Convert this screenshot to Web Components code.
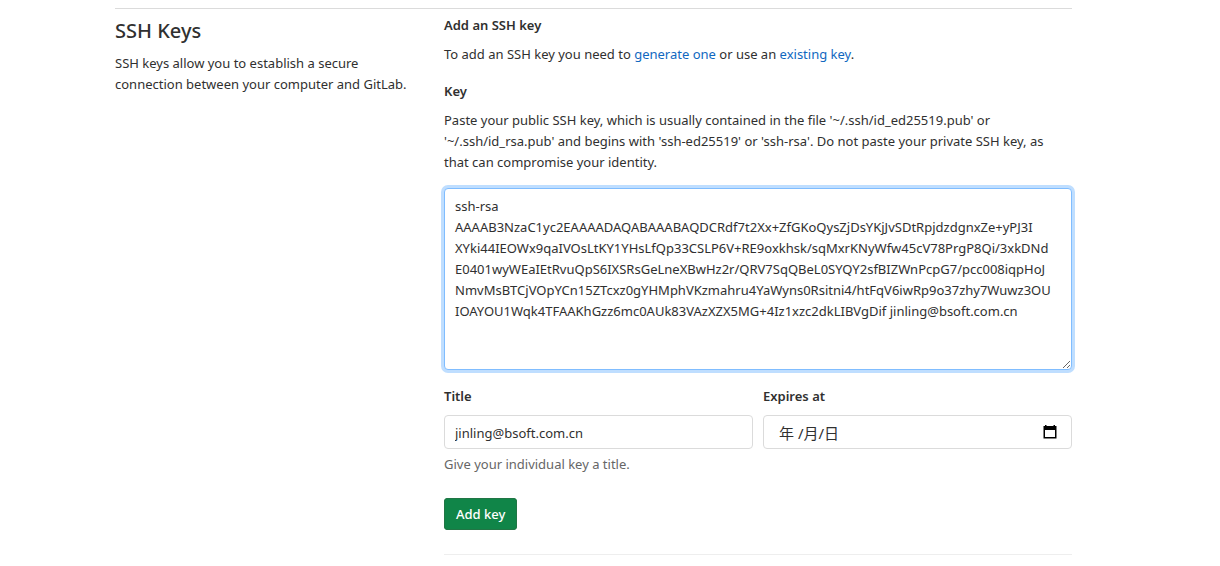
<!DOCTYPE html>
<html lang="en">
<head>
<meta charset="utf-8">
<meta name="viewport" content="width=device-width, initial-scale=1">
<title>SSH Keys</title>
<style>
    body {
        margin: 0;
        background: #fff;
        color: #303030;
        font: 13px/21px "Noto Sans", "Noto Sans CJK SC", sans-serif;
        --border: #dbdbdb;
        --link: #1068bf;
        --muted: #666;
        --green: #108548;
    }
    a {
        color: var(--link);
        text-decoration: none;
    }
</style>
</head>
<body>
<settings-section>
    <span slot="title">SSH Keys</span>
    <span slot="description">SSH keys allow you to establish a secure connection between your computer and GitLab.</span>
    <ssh-key-form>
        <span slot="intro">To add an SSH key you need to <a href="#generate">generate one</a> or use an <a href="#existing">existing key</a>.</span>
    </ssh-key-form>
</settings-section>

<script>
class SettingsSection extends HTMLElement {
    constructor () {
        super();
        this.attachShadow({ mode: 'open' }).innerHTML = `
            <style>
                :host {
                    display: block;
                    margin: 8px 148px 0 115px;
                    border-top: 1px solid var(--border);
                }
                .row {
                    display: grid;
                    grid-template-columns: minmax(0, 1fr) minmax(0, 2fr);
                    margin: 0 -15px;
                }
                .side, .content {
                    padding: 6px 15px 0;
                }
                h4 {
                    margin: 4px 0 10px;
                    font-size: 20px;
                    line-height: 24px;
                    font-weight: 500;
                }
                p {
                    margin: 0;
                }
            </style>
            <div class="row">
                <div class="side">
                    <h4><slot name="title"></slot></h4>
                    <p><slot name="description"></slot></p>
                </div>
                <div class="content"><slot></slot></div>
            </div>
        `;
    }
}

// label + control + help text; the control depends on the type attribute
class FormField extends HTMLElement {
    constructor () {
        super();
        this.attachShadow({ mode: 'open' });
    }

    connectedCallback () {
        this.shadowRoot.innerHTML = `
            <style>
                :host {
                    display: block;
                }
                label {
                    display: block;
                    margin-bottom: 8px;
                    font-weight: 600;
                }
                .help {
                    margin: 0 0 15px;
                    padding-right: 8px;
                }
                .hint {
                    margin: 5px 0 0;
                    color: var(--muted);
                }
                textarea, input {
                    display: block;
                    box-sizing: border-box;
                    width: 100%;
                    margin: 0;
                    font: inherit;
                    color: inherit;
                    outline: 0;
                }
                textarea, .box {
                    border: 1px solid var(--border);
                    border-radius: 4px;
                    background: #fff;
                }
                textarea {
                    height: 182px;
                    padding: 7px 10px;
                    resize: vertical;
                    border-color: #80bdff;
                    box-shadow: 0 0 0 3px #bfdeff;
                }
                .box {
                    display: flex;
                    align-items: center;
                }
                .box input {
                    flex: 1;
                    min-width: 0;
                    height: 32px;
                    padding: 2px 10px 0;
                    border: 0;
                    background: none;
                }
                .date input {
                    padding-left: 15px;
                    font-size: 15px;
                }
                input::placeholder {
                    color: inherit;
                    opacity: 1;
                }
                .date button {
                    display: flex;
                    margin: 0 13px 0 0;
                    padding: 0;
                    border: 0;
                    background: none;
                }
            </style>
            <label for="control">${this.getAttribute('label')}</label>
            ${this.control()}
        `;
        const value = this.getAttribute('value');
        if (value) this.value = value;
    }

    set value (text) {
        this.shadowRoot.getElementById('control').value = text;
    }

    control () {
        const type = this.getAttribute('type');
        if (type === 'textarea') {
            return `
                <p class="help"><slot></slot></p>
                <textarea id="control" spellcheck="false"></textarea>
            `;
        }
        if (type === 'date') {
            return `
                <div class="box date">
                    <input id="control" type="text" placeholder="年 /月/日">
                    <button type="button" aria-label="Show date picker">
                        <svg width="16" height="16" viewBox="0 0 16 16">
                            <path d="M3 1h1.5v1h7V1H13v1h1.5v12.5h-13V2H3zM3 6v7h10V6z" fill="#000" fill-rule="evenodd"/>
                        </svg>
                    </button>
                </div>
            `;
        }
        return `
            <div class="box"><input id="control" type="text"></div>
            <p class="hint"><slot></slot></p>
        `;
    }
}

class SshKeyForm extends HTMLElement {
    constructor () {
        super();
        this.attachShadow({ mode: 'open' }).innerHTML = `
            <style>
                :host {
                    display: block;
                }
                h5 {
                    margin: 0 0 8px;
                    font-size: inherit;
                    line-height: inherit;
                    font-weight: 600;
                }
                p {
                    margin: 0 0 16px;
                }
                form {
                    padding-bottom: 24px;
                    border-bottom: 1px solid #eee;
                }
                .fields {
                    display: grid;
                    grid-template-columns: 1fr 1fr;
                    gap: 10px;
                    margin: 16px 0 23px;
                }
                button {
                    height: 32px;
                    padding: 0 12px;
                    border: 0;
                    border-radius: 4px;
                    background: var(--green);
                    box-shadow: inset 0 0 0 1px #217645;
                    color: #fff;
                    font: inherit;
                    font-weight: 500;
                }
            </style>
            <h5>Add an SSH key</h5>
            <p><slot name="intro"></slot></p>
            <form>
                <form-field type="textarea" label="Key">Paste your public SSH key, which is usually contained in the file '~/.ssh/id_ed25519.pub' or '~/.ssh/id_rsa.pub' and begins with 'ssh-ed25519' or 'ssh-rsa'. Do not paste your private SSH key, as that can compromise your identity.</form-field>
                <div class="fields">
                    <form-field type="text" label="Title" value="jinling@bsoft.com.cn">Give your individual key a title.</form-field>
                    <form-field type="date" label="Expires at"></form-field>
                </div>
                <button type="button">Add key</button>
            </form>
        `;
    }

    connectedCallback () {
        this.shadowRoot.querySelector('form-field').value = [
            'ssh-rsa',
            'AAAAB3NzaC1yc2EAAAADAQABAAABAQDCRdf7t2Xx+ZfGKoQysZjDsYKjJvSDtRpjdzdgnxZe+yPJ3I',
            'XYki44IEOWx9qaIVOsLtKY1YHsLfQp33CSLP6V+RE9oxkhsk/sqMxrKNyWfw45cV78PrgP8Qi/3xkDNd',
            'E0401wyWEaIEtRvuQpS6IXSRsGeLneXBwHz2r/QRV7SqQBeL0SYQY2sfBIZWnPcpG7/pcc008iqpHoJ',
            'NmvMsBTCjVOpYCn15ZTcxz0gYHMphVKzmahru4YaWyns0Rsitni4/htFqV6iwRp9o37zhy7Wuwz3OU',
            'IOAYOU1Wqk4TFAAKhGzz6mc0AUk83VAzXZX5MG+4Iz1xzc2dkLIBVgDif jinling@bsoft.com.cn',
        ].join('\n');
    }
}

customElements.define('form-field', FormField);
customElements.define('ssh-key-form', SshKeyForm);
customElements.define('settings-section', SettingsSection);
</script>
</body>
</html>
